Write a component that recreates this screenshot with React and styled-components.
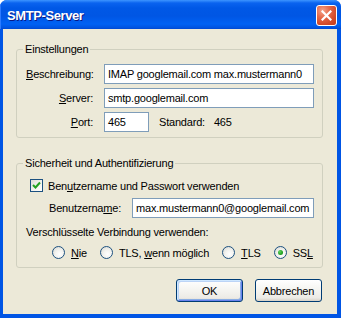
import React from 'react';
import styled, { createGlobalStyle } from 'styled-components';

const GlobalStyle = createGlobalStyle`
  html, body {
    margin: 0;
    padding: 0;
    background: #ffffff;
  }
  * {
    box-sizing: border-box;
  }
`;

const Window = styled.div`
  width: 341px;
  height: 318px;
  display: flex;
  flex-direction: column;
  border-radius: 7px 7px 0 0;
  overflow: hidden;
  background: #0055e5;
  font-family: 'Liberation Sans', Arial, sans-serif;
  font-size: 11px;
  letter-spacing: -0.2px;
  color: #000000;
`;

const TitleBar = styled.div`
  height: 29px;
  flex: none;
  display: flex;
  align-items: center;
  justify-content: space-between;
  padding: 0 4px 0 7px;
  background: linear-gradient(
    to bottom,
    #3d95ff 0px,
    #0a63ef 3px,
    #0058e6 8px,
    #0056e4 16px,
    #0062f4 24px,
    #0052de 28px,
    #0046d0 29px
  );
  box-shadow: inset 1px 0 0 #2c7bff;
`;

const Title = styled.span`
  font-family: 'Liberation Sans', Arial, sans-serif;
  font-weight: bold;
  font-size: 13px;
  letter-spacing: -0.4px;
  color: #ffffff;
  text-shadow: 1px 1px 0 #0a1883;
  margin-top: 1px;
`;

const CloseButton = styled.div`
  width: 21px;
  height: 21px;
  margin-top: 2px;
  border: 1px solid #ffffff;
  border-radius: 3px;
  background: radial-gradient(
    circle at 30% 25%,
    #f4a58c 0%,
    #e66a4a 35%,
    #d24a2a 70%,
    #c33c1c 100%
  );
  display: flex;
  align-items: center;
  justify-content: center;
`;

const Frame = styled.div`
  flex: 1;
  display: flex;
  flex-direction: column;
  margin: 0 4px 4px 3px;
  background: #ece9d8;
`;

const Group = styled.fieldset`
  margin: ${(p) => p.$top}px 14px 0 13px;
  padding: ${(p) => p.$padTop}px 8px ${(p) => p.$padBottom}px 9px;
  border: 1px solid #d0d0bf;
  border-radius: 3px;
  min-width: 0;
`;

const Legend = styled.legend`
  padding: 0 2px;
  margin-left: -3px;
  line-height: 14px;
  height: 14px;
`;

const FormGrid = styled.div`
  display: grid;
  grid-template-columns: 67px 210px;
  column-gap: 11px;
  row-gap: 4px;
  align-items: center;
`;

const Label = styled.label`
  text-align: right;
  white-space: nowrap;
  line-height: 13px;
`;

const Input = styled.div`
  height: 20px;
  width: ${(p) => (p.$width ? `${p.$width}px` : 'auto')};
  flex: ${(p) => (p.$width ? 'none' : '1')};
  border: 1px solid #7f9db9;
  background: #ffffff;
  padding: 0 3px;
  display: flex;
  align-items: center;
  white-space: nowrap;
  overflow: hidden;
`;

const PortRow = styled.div`
  display: flex;
  align-items: center;
`;

const InfoText = styled.span`
  margin-left: ${(p) => p.$gap}px;
  white-space: nowrap;
`;

const CheckRow = styled.div`
  display: flex;
  align-items: center;
  height: 13px;
  margin-left: 4px;
  gap: 5px;
`;

const Box = styled.div`
  width: 13px;
  height: 13px;
  border: 1px solid #1c5180;
  background: linear-gradient(135deg, #dcdcd7 0%, #f4f4f0 60%, #ffffff 100%);
  display: flex;
  align-items: center;
  justify-content: center;
`;

const UserRow = styled.div`
  display: flex;
  align-items: center;
  margin: 6px 0 0 23px;
`;

const UserLabel = styled.label`
  width: 83px;
  flex: none;
  white-space: nowrap;
`;

const Caption = styled.div`
  margin-top: 8px;
  line-height: 13px;
`;

const RadioRow = styled.div`
  display: flex;
  align-items: center;
  gap: 13px;
  margin: 7px 0 0 26px;
  height: 13px;
`;

const RadioItem = styled.div`
  display: flex;
  align-items: center;
  gap: 6px;
  white-space: nowrap;
`;

const RadioCircle = styled.div`
  width: 13px;
  height: 13px;
  border-radius: 50%;
  border: 1px solid #1c5180;
  background: radial-gradient(circle at 60% 65%, #ffffff 0%, #f2f2ee 45%, #d4d4cc 100%);
  display: flex;
  align-items: center;
  justify-content: center;
`;

const RadioDot = styled.div`
  width: 5px;
  height: 5px;
  border-radius: 50%;
  background: radial-gradient(circle at 35% 35%, #5fd45f 0%, #21a121 60%, #178a17 100%);
`;

const ButtonRow = styled.div`
  display: flex;
  justify-content: flex-end;
  gap: 12px;
  margin-top: 11px;
  padding-right: 15px;
`;

const Button = styled.div`
  width: 67px;
  height: 23px;
  border: 1px solid #003c74;
  border-radius: 3px;
  background: linear-gradient(to bottom, #ffffff 0%, #f4f4f0 50%, #ecebe6 85%, #d6d0c5 100%);
  display: flex;
  align-items: center;
  justify-content: center;
  box-shadow: ${(p) =>
    p.$default
      ? 'inset 1px 1px 0 #cee7ff, inset -1px -1px 0 #6982ee, inset 2px 2px 0 #bcd4f6, inset -2px -2px 0 #89ade4'
      : 'none'};
`;

const Key = styled.span`
  text-decoration: underline;
  text-underline-offset: 1px;
`;

const CloseIcon = () => (
  <svg width="11" height="11" viewBox="0 0 11 11">
    <path d="M1.5 1.5 L9.5 9.5 M9.5 1.5 L1.5 9.5" stroke="#ffffff" strokeWidth="2.2" strokeLinecap="square" />
  </svg>
);

const CheckMark = () => (
  <svg width="9" height="9" viewBox="0 0 9 9">
    <path d="M1 4 L3.5 6.5 L8 1.5" fill="none" stroke="#21a121" strokeWidth="2" />
  </svg>
);

const Radio = ({ checked, children }) => (
  <RadioItem>
    <RadioCircle>{checked && <RadioDot />}</RadioCircle>
    <span>{children}</span>
  </RadioItem>
);

const App = () => (
  <>
    <GlobalStyle />
    <Window>
      <TitleBar>
        <Title>SMTP-Server</Title>
        <CloseButton>
          <CloseIcon />
        </CloseButton>
      </TitleBar>
      <Frame>
        <Group $top={13} $padTop={8} $padBottom={5}>
          <Legend>Einstellungen</Legend>
          <FormGrid>
            <Label>
              <Key>B</Key>eschreibung:
            </Label>
            <Input>IMAP googlemail.com max.mustermann0</Input>
            <Label>
              <Key>S</Key>erver:
            </Label>
            <Input>smtp.googlemail.com</Input>
            <Label>
              <Key>P</Key>ort:
            </Label>
            <PortRow>
              <Input $width={45}>465</Input>
              <InfoText $gap={10}>Standard:</InfoText>
              <InfoText $gap={9}>465</InfoText>
            </PortRow>
          </FormGrid>
        </Group>
        <Group $top={18} $padTop={9} $padBottom={8}>
          <Legend>Sicherheit und Authentifizierung</Legend>
          <CheckRow>
            <Box>
              <CheckMark />
            </Box>
            <span>
              Ben<Key>u</Key>tzername und Passwort verwenden
            </span>
          </CheckRow>
          <UserRow>
            <UserLabel>
              Benutzerna<Key>m</Key>e:
            </UserLabel>
            <Input>max.mustermann0@googlemail.com</Input>
          </UserRow>
          <Caption>Verschlüsselte Verbindung verwenden:</Caption>
          <RadioRow>
            <Radio>
              <Key>N</Key>ie
            </Radio>
            <Radio>
              TLS, <Key>w</Key>enn möglich
            </Radio>
            <Radio>
              <Key>T</Key>LS
            </Radio>
            <Radio checked>
              SS<Key>L</Key>
            </Radio>
          </RadioRow>
        </Group>
        <ButtonRow>
          <Button $default>OK</Button>
          <Button>Abbrechen</Button>
        </ButtonRow>
      </Frame>
    </Window>
  </>
);

export default App;
